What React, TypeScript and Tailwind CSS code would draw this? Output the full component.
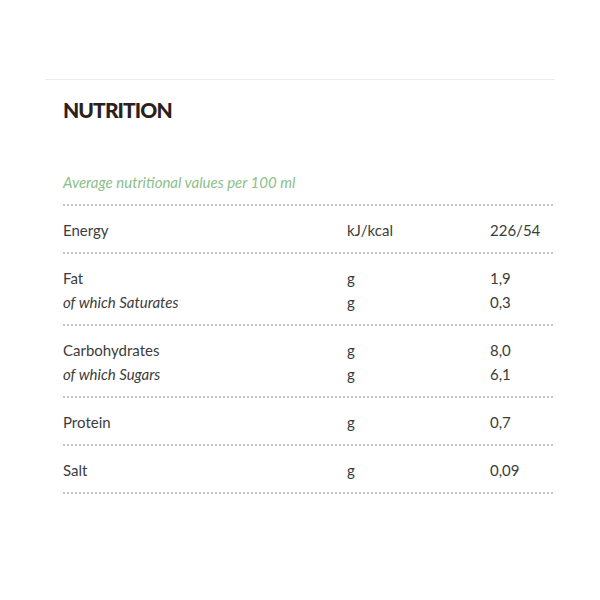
const rows: { items: { label: string; unit: string; value: string; sub?: boolean }[] }[] = [
  { items: [{ label: "Energy", unit: "kJ/kcal", value: "226/54" }] },
  {
    items: [
      { label: "Fat", unit: "g", value: "1,9" },
      { label: "of which Saturates", unit: "g", value: "0,3", sub: true },
    ],
  },
  {
    items: [
      { label: "Carbohydrates", unit: "g", value: "8,0" },
      { label: "of which Sugars", unit: "g", value: "6,1", sub: true },
    ],
  },
  { items: [{ label: "Protein", unit: "g", value: "0,7" }] },
  { items: [{ label: "Salt", unit: "g", value: "0,09" }] },
];

export default function App() {
  return (
    <div className="w-[600px] h-[600px] bg-white pt-[79px] font-['Lato',sans-serif]">
      <div className="mx-[45px] border-t border-[#ececec] pl-[18px] pr-[2px]">
        <h2 className="mt-[16px] text-[21px] leading-[28px] font-black tracking-[-0.9px] text-[#2b211c] font-['Lato',sans-serif]">
          NUTRITION
        </h2>
        <p className="mt-[46px] pb-[10px] text-[15px] leading-[24px] italic text-[#8cc08a] border-b-2 border-dotted border-[#c6c6c6]">
          Average nutritional values per 100 ml
        </p>
        {rows.map((group, i) => (
          <div key={i} className="pt-[12px] pb-[10px] border-b-2 border-dotted border-[#c6c6c6]">
            {group.items.map((r, j) => (
              <div key={j} className="grid grid-cols-[284px_143px_1fr] text-[15px] leading-[24px] text-[#3c3c3c]">
                <span className={r.sub ? "italic" : ""}>{r.label}</span>
                <span>{r.unit}</span>
                <span>{r.value}</span>
              </div>
            ))}
          </div>
        ))}
      </div>
    </div>
  );
}
